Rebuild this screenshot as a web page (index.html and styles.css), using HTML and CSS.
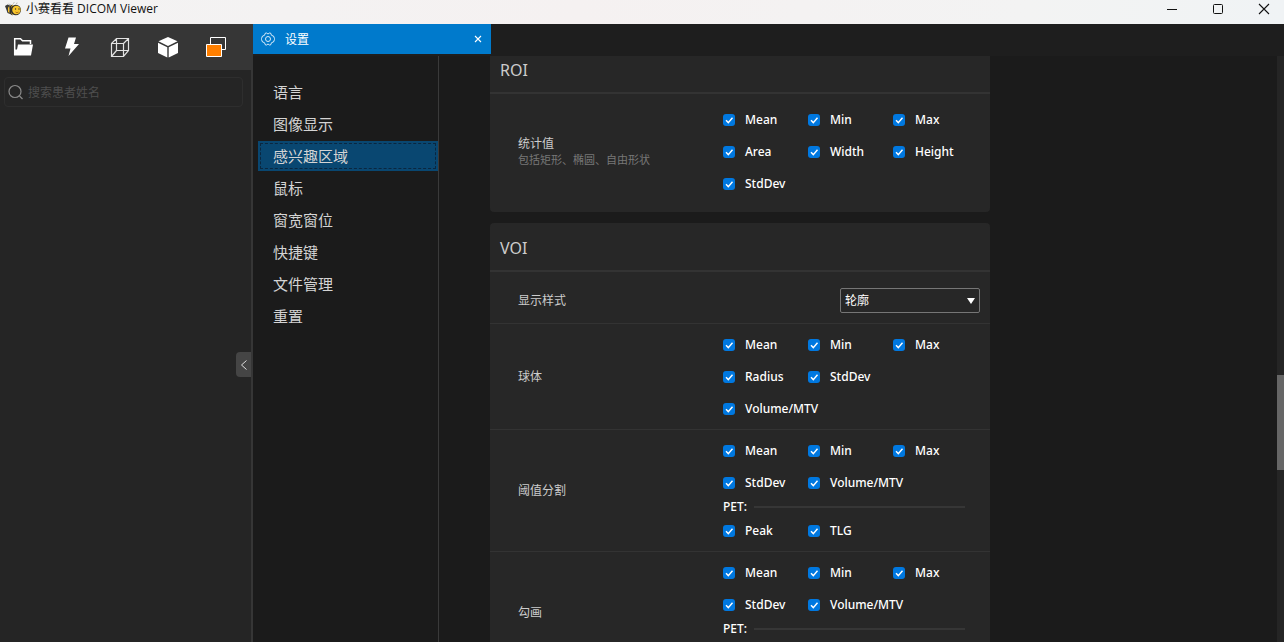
FILE: index.html
```html
<!DOCTYPE html>
<html lang="zh-CN">
<head>
<meta charset="utf-8">
<title>小赛看看 DICOM Viewer</title>
<link rel="stylesheet" href="styles.css">
</head>
<body>
<header class="titlebar">
  <svg class="app-logo" width="16" height="16" viewBox="0 0 16 16" aria-hidden="true">
    <path d="M3.500 3L6 4M8 2.500L9.500 1.500M11 2.500L12.500 2" stroke="#b8b8b8"/>
    <path d="M0 5L2.500 3.500L5 4.500L4 9L5 13L2.500 12L1.500 9Z" fill="#3a3a38"/>
    <path d="M3 6.500L4.500 5V12.500L3 10.500Z" fill="#f6c026"/>
    <path d="M4.500 5L7.500 3.500V14.500L4.500 12.500Z" fill="#33302a"/>
    <path d="M6.500 5L8 3.800V14L6.500 12.500Q5.500 9 6.500 5Z" fill="#f6c026"/>
    <circle cx="10.800" cy="9" r="5.200" fill="#33302a"/>
    <circle cx="11.400" cy="9" r="4.200" fill="#f8c62c"/>
    <circle cx="10.500" cy="8" r=".7" fill="#33302a"/>
    <circle cx="14" cy="8" r=".7" fill="#33302a"/>
    <path d="M10.500 11Q12 12.500 13.500 11" fill="none" stroke="#b5741c"/>
  </svg>
  <span class="app-title">小赛看看 DICOM Viewer</span>
  <div class="window-buttons">
    <button aria-label="最小化"><svg width="12" height="12"><path d="M1 6.500H11" stroke="#111"/></svg></button>
    <button aria-label="最大化"><svg width="12" height="12"><rect x="1.500" y="1.500" width="9" height="9" rx="1" fill="none" stroke="#111"/></svg></button>
    <button aria-label="关闭"><svg width="12" height="12"><path d="M1 1L11 11M11 1L1 11" stroke="#111" stroke-width="1.100"/></svg></button>
  </div>
</header>
<div class="app">
  <aside class="sidebar">
    <div class="toolbar">
      <button aria-label="打开文件夹"><svg width="24" height="24" viewBox="0 0 24 24"><path d="M2.700 20V3.700H8.500L10.500 5.700H18.500V9" fill="none" stroke="#fff" stroke-width="1.500"/><path d="M6 9.500H21L19 20.500H2V14.500H5Z" fill="#fff"/></svg></button>
      <button aria-label="快速操作"><svg width="24" height="24" viewBox="0 0 24 24"><path d="M8.500 2.500H16L14 9H19L8.500 21L10.500 13.500H5Z" fill="#fff"/></svg></button>
      <button aria-label="三维线框"><svg width="24" height="24" viewBox="0 0 24 24" fill="none" stroke="#e2e2e2" stroke-width="1.200"><path d="M3.500 8.500L8.500 3.500H20.500V15.500L15.500 21.500H3.500ZM3.500 8.500H15.500V21.500M15.500 8.500L20.500 3.500M8.500 3.500V15.500H20.500M8.500 15.500L3.500 21.500"/></svg></button>
      <button aria-label="三维体"><svg width="24" height="24" viewBox="0 0 24 24" fill="#fff"><path d="M12 2L21.500 6.300L12 11L2.500 6.300Z"/><path d="M2 7.700L11.300 12.200V22.500L2 18Z"/><path d="M22 7.700L12.700 12.200V22.500L22 18Z"/></svg></button>
      <button aria-label="窗口布局"><svg width="24" height="24" viewBox="0 0 24 24" stroke="#fff"><path d="M6.500 2.500H21.500V14.500H6.500Z" fill="#363636"/><path d="M2.500 9.500H17.500V21.500H2.500Z" fill="#ff7f00"/></svg></button>
    </div>
    <label class="search">
      <svg width="16" height="16" viewBox="0 0 16 16" fill="none" stroke="#8a8a8a" stroke-width="1.200"><circle cx="7" cy="7.500" r="6"/><path d="M11.500 12L14.500 15"/></svg>
      <input type="text" placeholder="搜索患者姓名" aria-label="搜索患者姓名">
    </label>
    <button class="collapse" aria-label="收起侧栏"><svg width="8" height="12" viewBox="0 0 8 12"><path d="M6.500 1.500L1.500 6L6.500 10.500" fill="none" stroke="#ddd"/></svg></button>
  </aside>
  <div class="workspace">
    <div class="tabs">
      <div class="tab">
        <svg width="14" height="14" viewBox="0 0 14 14" fill="none" stroke="#d9ebf8"><path d="M4.500 1H5.500L7 2L8.500 1H9.500L10.700 3.500L12.500 4L13.500 6.500V7.500L12.500 10L10.700 10.500L9.500 13H8.500L7 12L5.500 13H4.500L3.300 10.500L1.500 10L.5 7.500V6.500L1.500 4L3.300 3.500Z"/><circle cx="7" cy="7" r="2.500"/></svg>
        <span>设置</span>
        <button class="tab-close" aria-label="关闭设置"><svg width="8" height="8"><path d="M1 1L7 7M7 1L1 7" stroke="#fff" stroke-width="1.100"/></svg></button>
      </div>
    </div>
    <div class="settings">
      <nav class="menu">
        <button>语言</button>
        <button>图像显示</button>
        <button class="active">感兴趣区域</button>
        <button>鼠标</button>
        <button>窗宽窗位</button>
        <button>快捷键</button>
        <button>文件管理</button>
        <button>重置</button>
      </nav>
      <main class="content">
        <section class="card">
          <h2>ROI</h2>
          <div class="row spacious">
            <div class="name">统计值<small>包括矩形、椭圆、自由形状</small></div>
            <div class="checks">
              <label><input type="checkbox" checked>Mean</label>
              <label><input type="checkbox" checked>Min</label>
              <label><input type="checkbox" checked>Max</label>
              <label><input type="checkbox" checked>Area</label>
              <label><input type="checkbox" checked>Width</label>
              <label><input type="checkbox" checked>Height</label>
              <label><input type="checkbox" checked>StdDev</label>
            </div>
          </div>
        </section>
        <section class="card">
          <h2>VOI</h2>
          <div class="row style-row">
            <label class="name" for="display-style">显示样式</label>
            <select id="display-style"><option>轮廓</option></select>
          </div>
          <div class="row">
            <div class="name">球体</div>
            <div class="checks">
              <label><input type="checkbox" checked>Mean</label>
              <label><input type="checkbox" checked>Min</label>
              <label><input type="checkbox" checked>Max</label>
              <label><input type="checkbox" checked>Radius</label>
              <label><input type="checkbox" checked>StdDev</label>
              <label><input type="checkbox" checked>Volume/MTV</label>
            </div>
          </div>
          <div class="row">
            <div class="name">阈值分割</div>
            <div class="checks">
              <label><input type="checkbox" checked>Mean</label>
              <label><input type="checkbox" checked>Min</label>
              <label><input type="checkbox" checked>Max</label>
              <label><input type="checkbox" checked>StdDev</label>
              <label><input type="checkbox" checked>Volume/MTV</label>
              <div class="divider">PET:</div>
              <label><input type="checkbox" checked>Peak</label>
              <label><input type="checkbox" checked>TLG</label>
            </div>
          </div>
          <div class="row">
            <div class="name">勾画</div>
            <div class="checks open-ended">
              <label><input type="checkbox" checked>Mean</label>
              <label><input type="checkbox" checked>Min</label>
              <label><input type="checkbox" checked>Max</label>
              <label><input type="checkbox" checked>StdDev</label>
              <label><input type="checkbox" checked>Volume/MTV</label>
              <div class="divider">PET:</div>
            </div>
          </div>
        </section>
      </main>
      <div class="scrollbar"><div class="thumb"></div></div>
    </div>
  </div>
</div>
</body>
</html>
```
FILE: styles.css
```css
* {
  box-sizing: border-box;
}

body {
  margin: 0;
  height: 100vh;
  overflow: hidden;
  display: flex;
  flex-direction: column;
  background: #1b1b1b;
  color: #fff;
  font: 12px/16px "Noto Sans", "Noto Sans CJK SC", sans-serif;
}

button,
input,
select {
  font: inherit;
  color: inherit;
}

button {
  border: 0;
  padding: 0;
  background: none;
  display: flex;
  align-items: center;
  justify-content: center;
}

svg {
  display: block;
  flex: none;
}

.titlebar {
  flex: none;
  height: 24px;
  padding: 0 0 7px 5px;
  display: flex;
  align-items: center;
  gap: 5px;
  background: linear-gradient(90deg, #f3f3f3, #f5f1f1 45%, #f3f3f3 80%, #f0f3f5);
  color: #111;
}

.app-title {
  font-family: "Open Sans", "Noto Sans CJK SC", sans-serif;
}

.window-buttons {
  margin-left: auto;
  display: flex;
  gap: 6px;
}

.window-buttons button {
  width: 40px;
  height: 16px;
}

.app {
  flex: 1;
  min-height: 0;
  display: flex;
}

.sidebar {
  position: relative;
  flex: none;
  width: 253px;
  background: #252525;
  border-right: 2px solid #363636;
}

.toolbar {
  height: 46px;
  display: flex;
  background: #363636;
}

.toolbar button {
  width: 48px;
}

.search {
  margin: 7px 8px 0 4px;
  height: 30px;
  padding: 0 3px;
  border: 1px solid #2e2e2e;
  border-radius: 4px;
  display: flex;
  align-items: center;
  gap: 4px;
}

.search input {
  flex: 1;
  min-width: 0;
  padding: 2px 0 0;
  border: 0;
  outline: 0;
  background: none;
}

.search input::placeholder {
  color: #4e4e4e;
}

.collapse {
  position: absolute;
  right: 0;
  top: 328px;
  width: 15px;
  height: 25px;
  border-radius: 4px 0 0 4px;
  background: #454545;
}

.workspace {
  flex: 1;
  min-width: 0;
  display: flex;
  flex-direction: column;
}

.tabs {
  flex: none;
  height: 32px;
  background: #1e1e1e;
}

.tab {
  width: 238px;
  height: 30px;
  padding: 0 8px;
  display: flex;
  align-items: center;
  gap: 10px;
  background: #007acc;
}

.tab span {
  padding-top: 2px;
}

.tab-close {
  margin-left: auto;
  width: 10px;
  height: 16px;
}

.settings {
  flex: 1;
  min-height: 0;
  display: flex;
}

.menu {
  flex: none;
  width: 186px;
  padding: 21px 0 0 5px;
  border-right: 1px solid #3a3a3a;
  display: flex;
  flex-direction: column;
  gap: 2px;
  color: #d4d4d4;
  font-size: 15px;
}

.menu button {
  height: 30px;
  padding-left: 15px;
  justify-content: flex-start;
}

.menu .active {
  background: #094771;
  outline: 1px dashed #0a2740;
  outline-offset: -3px;
}

.content {
  flex: 1;
  min-width: 0;
  overflow: hidden;
  padding-left: 51px;
}

.card {
  max-width: 500px;
  margin-bottom: 11px;
  border-radius: 4px;
  background: #272727;
}

.card:first-child {
  margin-top: -11px;
}

.card h2 {
  margin: 0;
  height: 49px;
  padding: 2px 10px 0;
  border-bottom: 2px solid #333;
  display: flex;
  align-items: center;
  color: #ccc;
  font-size: 16px;
  font-weight: 400;
}

.row {
  padding: 5px 10px 4px 28px;
  display: flex;
  align-items: center;
  justify-content: space-between;
  border-bottom: 1px solid #333;
}

.row.spacious {
  padding-top: 10px;
  padding-bottom: 12px;
}

.row.style-row {
  padding-top: 16px;
  padding-bottom: 10px;
}

.row:last-child {
  border-bottom: 0;
}

.name {
  color: #ccc;
}

.name small {
  display: block;
  font-size: 11px;
  color: #777;
}

.checks {
  width: 257px;
  display: flex;
  flex-wrap: wrap;
  font-weight: 500;
}

.checks.open-ended {
  padding-bottom: 32px;
}

.checks label {
  min-width: 85px;
  height: 32px;
  display: flex;
  align-items: center;
  gap: 10px;
  line-height: 18px;
}

.checks input {
  appearance: none;
  margin: 0;
  width: 12px;
  height: 12px;
  border-radius: 3px;
  background: #0078e0;
}

.checks input:checked {
  background-image: url("data:image/svg+xml,%3Csvg xmlns='http://www.w3.org/2000/svg' width='12' height='12'%3E%3Cpath d='M3 6.300L5.300 8.600L9.500 3.700' fill='none' stroke='white' stroke-width='1.400'/%3E%3C/svg%3E");
}

.divider {
  width: 100%;
  height: 16px;
  padding-right: 15px;
  display: flex;
  align-items: center;
  gap: 7px;
}

.divider::after {
  content: "";
  flex: 1;
  height: 2px;
  background: #363636;
}

select {
  appearance: none;
  width: 140px;
  height: 25px;
  padding: 1px 4px 0;
  border: 1px solid #767676;
  border-radius: 2px;
  background: #272727 url("data:image/svg+xml,%3Csvg xmlns='http://www.w3.org/2000/svg' width='8' height='6'%3E%3Cpath d='M0 0H8L4 6Z' fill='white'/%3E%3C/svg%3E") no-repeat right 4px center;
}

.scrollbar {
  flex: none;
  width: 7px;
  display: flex;
  flex-direction: column;
  background: #252525;
}

.thumb {
  height: 95px;
  margin-top: 319px;
  background: #666;
}
```
